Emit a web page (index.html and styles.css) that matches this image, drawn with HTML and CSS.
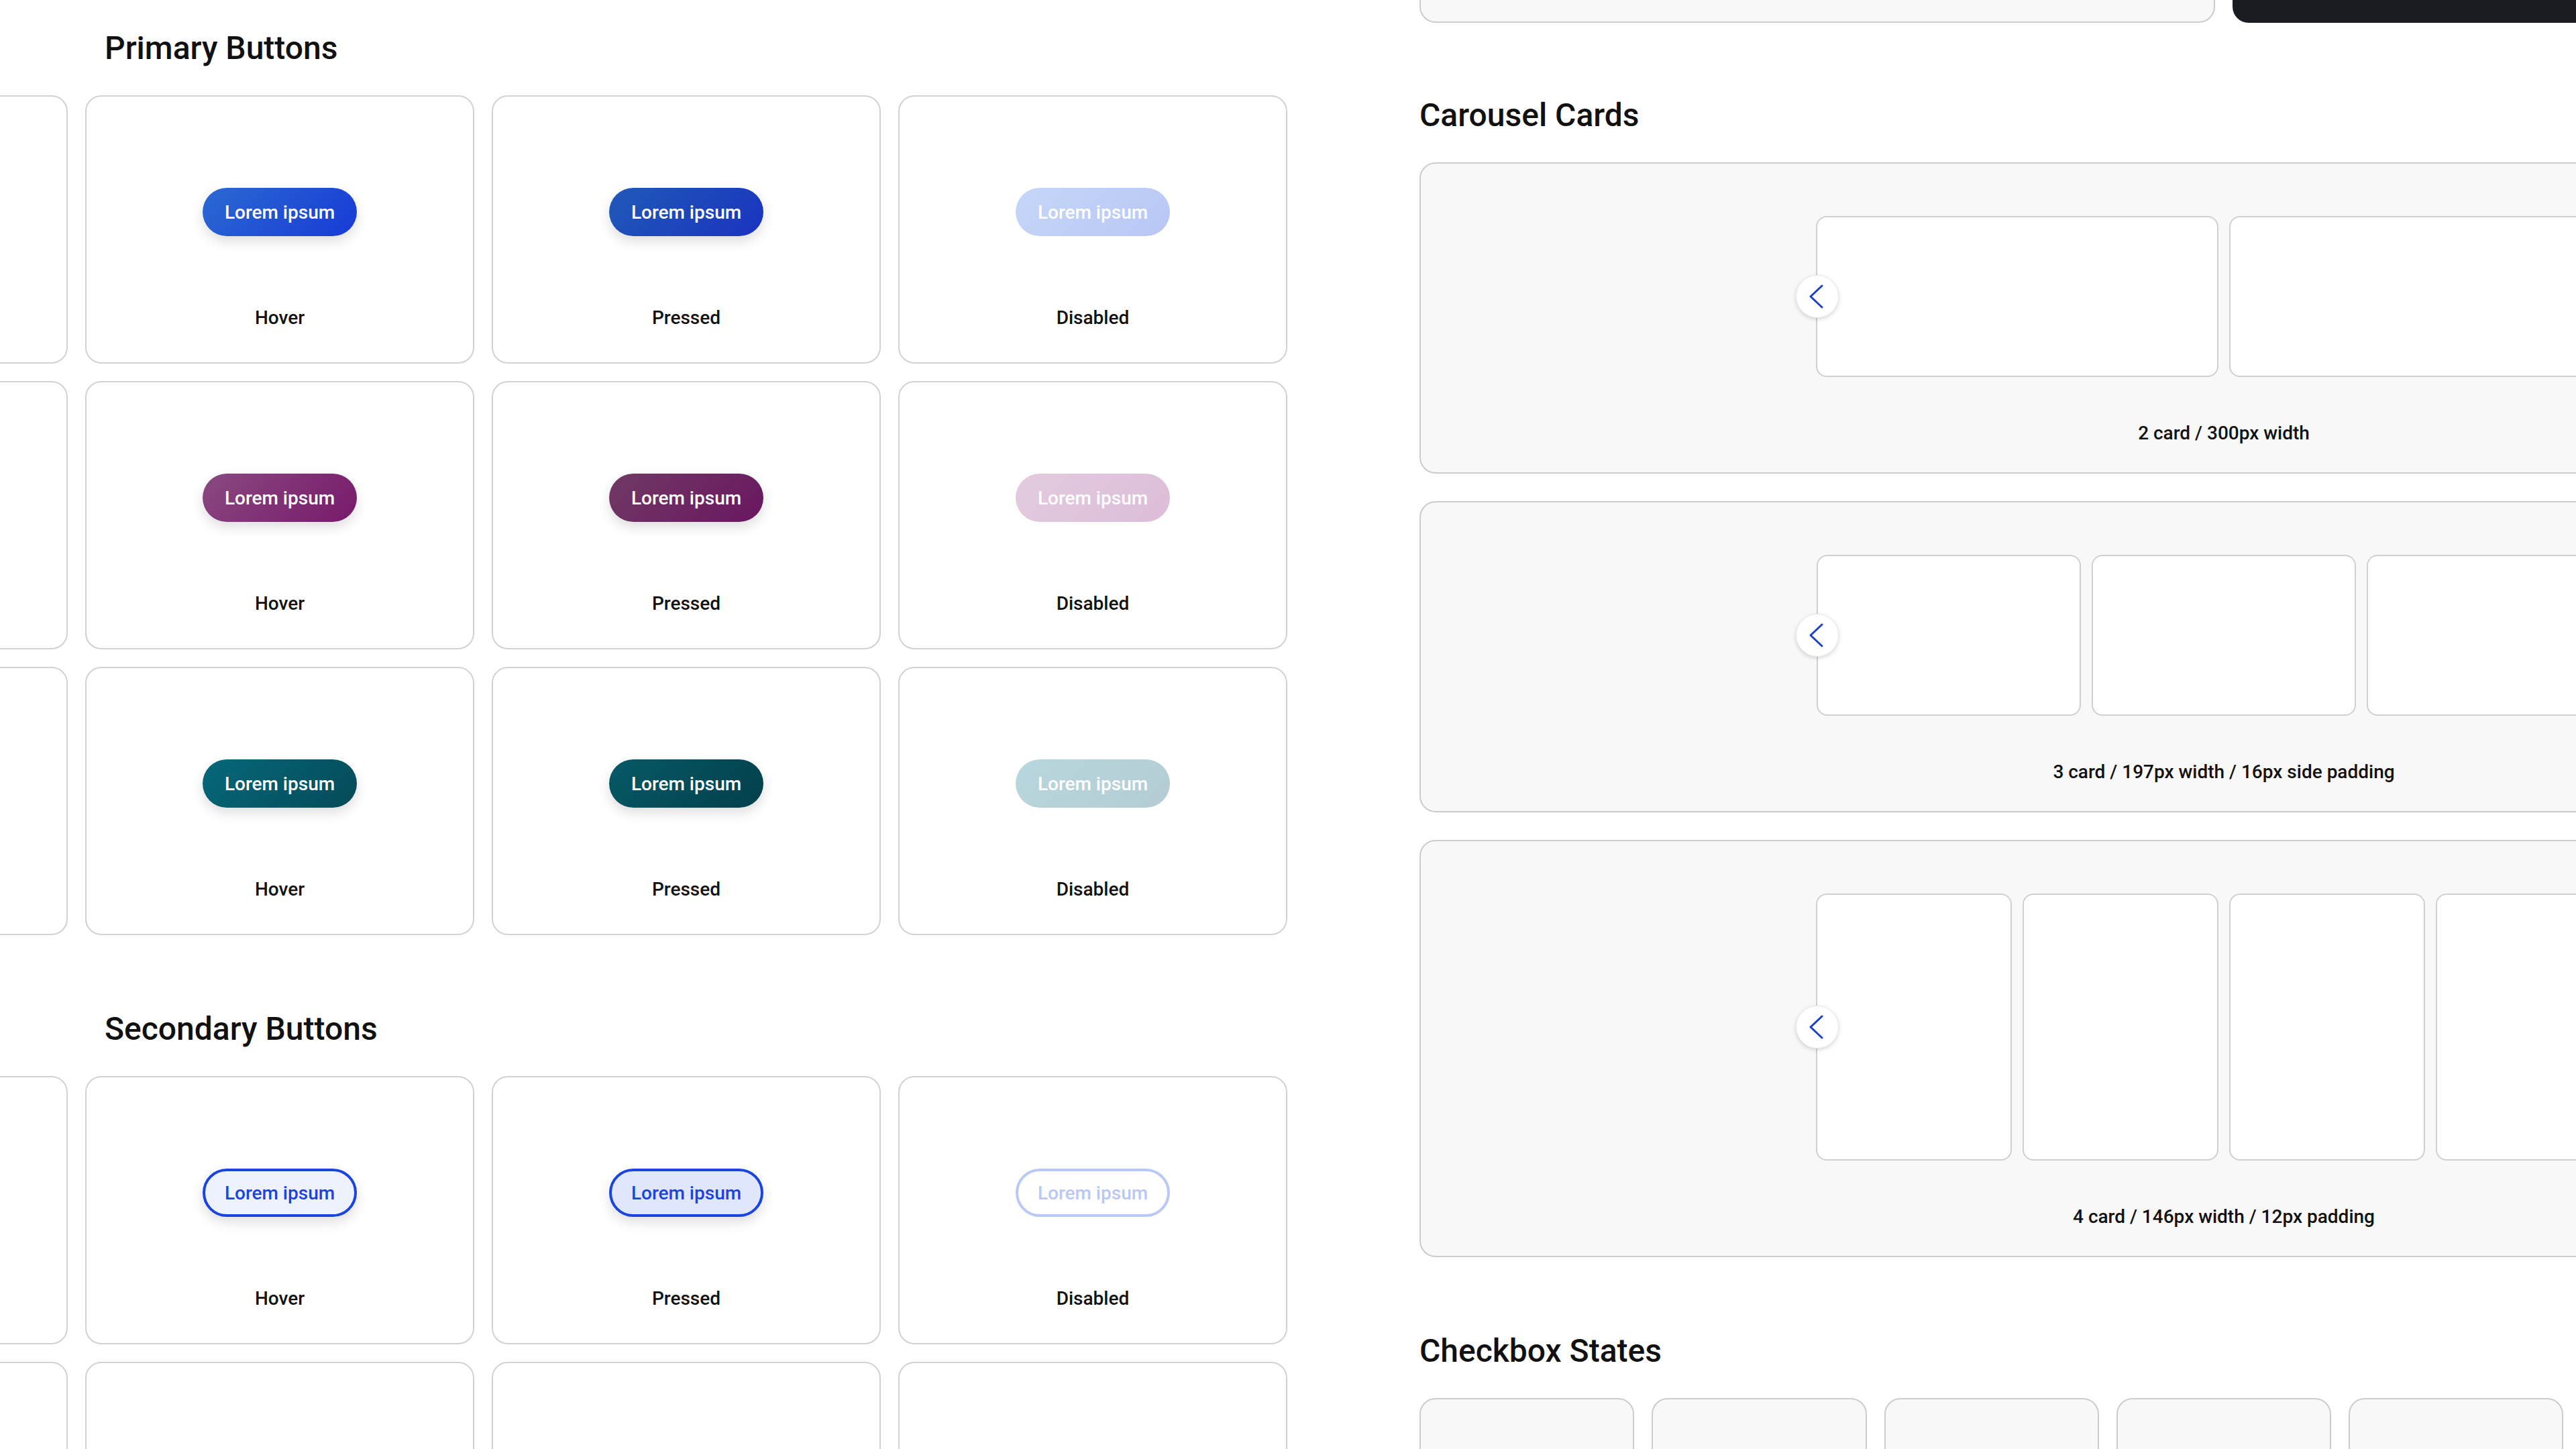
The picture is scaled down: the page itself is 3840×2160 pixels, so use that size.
FILE: index.html
```html
<!DOCTYPE html>
<html lang="en">
<head>
  <meta charset="UTF-8" />
  <meta name="viewport" content="width=device-width, initial-scale=1.0" />
  <title>UI Kit – Components</title>
  <link rel="stylesheet" href="styles.css">
</head>
<body>
  <div class="board">

    <div class="column column-left">
      <section class="group">
        <h2 class="group-title">Primary Buttons</h2>
        <div class="state-grid">
          <div class="state-card"></div>
          <div class="state-card"><button class="btn btn-blue hover">Lorem ipsum</button><span class="state-label">Hover</span></div>
          <div class="state-card"><button class="btn btn-blue pressed">Lorem ipsum</button><span class="state-label">Pressed</span></div>
          <div class="state-card"><button class="btn btn-blue disabled">Lorem ipsum</button><span class="state-label">Disabled</span></div>

          <div class="state-card"></div>
          <div class="state-card"><button class="btn btn-purple hover">Lorem ipsum</button><span class="state-label">Hover</span></div>
          <div class="state-card"><button class="btn btn-purple pressed">Lorem ipsum</button><span class="state-label">Pressed</span></div>
          <div class="state-card"><button class="btn btn-purple disabled">Lorem ipsum</button><span class="state-label">Disabled</span></div>

          <div class="state-card"></div>
          <div class="state-card"><button class="btn btn-teal hover">Lorem ipsum</button><span class="state-label">Hover</span></div>
          <div class="state-card"><button class="btn btn-teal pressed">Lorem ipsum</button><span class="state-label">Pressed</span></div>
          <div class="state-card"><button class="btn btn-teal disabled">Lorem ipsum</button><span class="state-label">Disabled</span></div>
        </div>
      </section>

      <section class="group">
        <h2 class="group-title">Secondary Buttons</h2>
        <div class="state-grid">
          <div class="state-card"></div>
          <div class="state-card"><button class="btn btn-outline hover">Lorem ipsum</button><span class="state-label">Hover</span></div>
          <div class="state-card"><button class="btn btn-outline pressed">Lorem ipsum</button><span class="state-label">Pressed</span></div>
          <div class="state-card"><button class="btn btn-outline disabled">Lorem ipsum</button><span class="state-label">Disabled</span></div>

          <div class="state-card"></div>
          <div class="state-card"></div>
          <div class="state-card"></div>
          <div class="state-card"></div>
        </div>
      </section>
    </div>

    <div class="column column-right">
      <div class="toolbar">
        <div class="search-box"></div>
        <button class="dark-button"></button>
      </div>

      <section class="group">
        <h2 class="group-title">Carousel Cards</h2>

        <div class="carousel">
          <div class="track">
            <button class="arrow">
              <svg width="64" height="64" viewBox="0 0 64 64"><path d="M39 16 L22 32 L39 48" /></svg>
            </button>
            <div class="slide slide-2"></div>
            <div class="slide slide-2"></div>
          </div>
          <p class="carousel-label">2 card / 300px width</p>
        </div>

        <div class="carousel">
          <div class="track">
            <button class="arrow">
              <svg width="64" height="64" viewBox="0 0 64 64"><path d="M39 16 L22 32 L39 48" /></svg>
            </button>
            <div class="slide slide-3"></div>
            <div class="slide slide-3"></div>
            <div class="slide slide-3"></div>
          </div>
          <p class="carousel-label">3 card / 197px width / 16px side padding</p>
        </div>

        <div class="carousel">
          <div class="track">
            <button class="arrow">
              <svg width="64" height="64" viewBox="0 0 64 64"><path d="M39 16 L22 32 L39 48" /></svg>
            </button>
            <div class="slide slide-4"></div>
            <div class="slide slide-4"></div>
            <div class="slide slide-4"></div>
            <div class="slide slide-4"></div>
          </div>
          <p class="carousel-label">4 card / 146px width / 12px padding</p>
        </div>
      </section>

      <section class="group">
        <h2 class="group-title">Checkbox States</h2>
        <div class="checkbox-grid">
          <div class="checkbox-card"></div>
          <div class="checkbox-card"></div>
          <div class="checkbox-card"></div>
          <div class="checkbox-card"></div>
          <div class="checkbox-card"></div>
          <div class="checkbox-card"></div>
          <div class="checkbox-card"></div>
        </div>
      </section>
    </div>

  </div>
</body>
</html>
```

FILE: styles.css
```css
* {
  box-sizing: border-box;
}
body {
  font-family: Roboto, 'Noto Sans', sans-serif;
  margin: 0;
  padding: 0;
  background: #fff;
  color: #111;
  width: 3840px;
  height: 2160px;
  overflow: hidden;
}
.board {
  display: flex;
  gap: 197px;
}
.column {
  flex: 0 0 2398px;
  width: 2398px;
}
.column-left {
  margin-left: -479px;
  padding-top: 44px;
}
.column-left .group-title {
  padding-left: 635px;
}
.group + .group {
  margin-top: 112px;
}
.toolbar + .group {
  margin-top: 110px;
}
.group-title {
  font-size: 48px;
  line-height: 56px;
  font-weight: 500;
  margin: 0 0 42px;
  color: #111;
}

/* state cards */
.state-grid {
  display: grid;
  grid-template-columns: repeat(4, 580px);
  grid-auto-rows: 400px;
  gap: 26px;
}
.state-card {
  display: flex;
  flex-direction: column;
  align-items: center;
  padding-top: 136px;
  border: 2px solid #d2d2d2;
  border-radius: 24px;
  background: #fff;
}
.state-label {
  margin-top: 104px;
  font-size: 28px;
  line-height: 36px;
  font-weight: 500;
  color: #111;
}

/* buttons */
.btn {
  font-family: inherit;
  height: 72px;
  padding: 0 33px;
  border: none;
  border-radius: 36px;
  font-size: 28px;
  font-weight: 500;
  color: #fff;
  cursor: pointer;
}
.btn.hover,
.btn.pressed {
  box-shadow: 0 8px 18px rgba(0, 0, 0, 0.13);
}
.btn-blue { background: linear-gradient(135deg, #2a6ad2, #183ad6); }
.btn-blue.pressed { background: linear-gradient(135deg, #205ab8, #1a33bf); }
.btn-blue.disabled { background: linear-gradient(135deg, #c5d7f7, #b9c6f6); }

.btn-purple { background: linear-gradient(135deg, #8a4a80, #77196b); }
.btn-purple.pressed { background: linear-gradient(135deg, #703a64, #6a1660); }
.btn-purple.disabled { background: linear-gradient(135deg, #e2ccdf, #ddbcd8); }

.btn-teal { background: linear-gradient(135deg, #06687a, #044a58); }
.btn-teal.pressed { background: linear-gradient(135deg, #055a66, #033f4b); }
.btn-teal.disabled { background: linear-gradient(135deg, #b8d7de, #b4ccd3); }

.btn-outline {
  background: #fff;
  border: 4px solid #1a44e0;
  color: #1a44e0;
  padding: 0 29px;
}
.btn-outline.hover { background: #eef2fe; }
.btn-outline.pressed { background: #e0e7fc; }
.btn-outline.disabled {
  border-color: #b9c8f6;
  color: #b9c8f6;
}

/* right column */
.toolbar {
  display: grid;
  grid-template-columns: 1fr 1fr;
  gap: 26px;
  height: 96px;
  margin-top: -62px;
}
.search-box {
  background: #f8f8f8;
  border: 2px solid #cccccc;
  border-radius: 24px;
}
.dark-button {
  background: #1b1c22;
  border: none;
  border-radius: 24px;
}

.carousel {
  background: #f8f8f8;
  border: 2px solid #cccccc;
  border-radius: 24px;
  padding: 78px 0 40px;
  margin-bottom: 41px;
}
.carousel:last-child {
  margin-bottom: 0;
}
.track {
  position: relative;
  display: flex;
  justify-content: center;
  gap: 16px;
  margin-bottom: 66px;
}
.slide {
  background: #fff;
  border: 2px solid #d0d0d0;
  border-radius: 16px;
}
.slide-2 { width: 600px; height: 240px; }
.slide-3 { width: 394px; height: 240px; }
.slide-4 { width: 292px; height: 398px; }

.arrow {
  position: absolute;
  top: 50%;
  left: 559px;
  width: 64px;
  height: 64px;
  margin-top: -32px;
  padding: 0;
  border: 1px solid #ececec;
  border-radius: 50%;
  background: #fff;
  box-shadow: 0 2px 6px rgba(0, 0, 0, 0.16);
  z-index: 2;
}
.arrow svg {
  display: block;
  margin: -1px;
}
.arrow path {
  fill: none;
  stroke: #1b3fc4;
  stroke-width: 3;
  stroke-linecap: round;
  stroke-linejoin: round;
}
.carousel-label {
  margin: 0;
  text-align: center;
  font-size: 28px;
  line-height: 36px;
  font-weight: 500;
  color: #111;
}

.checkbox-grid {
  display: grid;
  grid-template-columns: repeat(7, 1fr);
  gap: 26px;
}
.checkbox-card {
  height: 300px;
  background: #f8f8f8;
  border: 2px solid #cccccc;
  border-radius: 24px;
}
```
